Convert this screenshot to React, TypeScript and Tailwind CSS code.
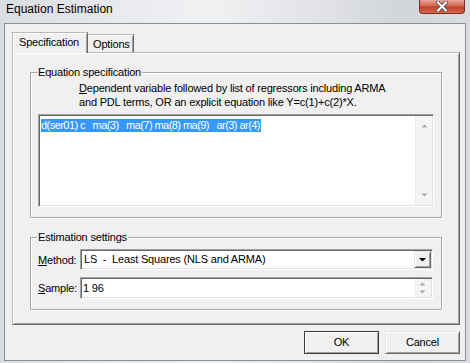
import React from 'react';

const sunken =
  'border border-t-[#a0a0a0] border-l-[#a0a0a0] border-r-white border-b-white shadow-[inset_1px_1px_0_#696969,inset_-1px_-1px_0_#e3e3e3]';
const raised =
  'border border-t-[#e3e3e3] border-l-[#e3e3e3] border-r-[#696969] border-b-[#696969] shadow-[inset_1px_1px_0_#fff,inset_-1px_-1px_0_#a0a0a0]';
const etched = 'border border-[#a8a8a8] shadow-[inset_1px_1px_0_#fff,1px_1px_0_#fff]';

function Arrow({ up, dark }: { up?: boolean; dark?: boolean }) {
  return (
    <svg width="7" height="5" viewBox="0 0 7 5">
      {dark ? (
        <path d="M0 1h7L3.5 4.5z" fill="#000" />
      ) : up ? (
        <>
          <path d="M0.5 4.5h6L3.5 1.5z" fill="#fff" transform="translate(0.5 0.5)" />
          <path d="M0.5 4.5h6L3.5 1.5z" fill="#a3a3a3" />
        </>
      ) : (
        <>
          <path d="M0.5 0.5h6L3.5 3.5z" fill="#fff" transform="translate(0.5 0.5)" />
          <path d="M0.5 0.5h6L3.5 3.5z" fill="#a3a3a3" />
        </>
      )}
    </svg>
  );
}

function GroupBox({ title, className, children }: { title: string; className: string; children: React.ReactNode }) {
  return (
    <div className={`relative ${etched} ${className}`}>
      <span className="absolute left-[6px] top-[-8px] bg-[#f0f0f0] px-[1px] leading-[14px]">{title}</span>
      {children}
    </div>
  );
}

export default function App() {
  return (
    <div className="w-[470px] h-[363px] overflow-hidden flex flex-col px-[4px] pb-[2px] bg-[linear-gradient(90deg,#dadde1_0%,#e8eaed_25%,#f0f1f3_45%,#dfe1e4_70%,#d2d5d9_85%,#dadcdf_100%)] font-['Liberation_Sans',Arial,sans-serif] text-[11px] tracking-[-0.18px] text-black">
      <div className="h-[23px] shrink-0 flex items-start justify-between">
        <span className="pl-[2px] pt-[2px] text-[12px] tracking-normal leading-[15px] text-black">Equation Estimation</span>
        <div className="mr-[1px] w-[46px] h-[14px] rounded-b-[4px] border border-t-0 border-[#7a2d24] bg-[linear-gradient(180deg,#e7a395_0%,#d3654f_45%,#c24128_55%,#d36a4f_100%)] flex items-center justify-center">
          <svg width="12" height="11" viewBox="0 0 12 11">
            <path d="M2 1.5l8 8M10 1.5l-8 8" stroke="#4a4a5a" strokeWidth="3.6" strokeLinecap="square" />
            <path d="M2 1.5l8 8M10 1.5l-8 8" stroke="#fff" strokeWidth="2" strokeLinecap="square" />
          </svg>
        </div>
      </div>

      <div className="flex-1 border border-[#8a9097] bg-[#f0f0f0] flex flex-col pl-[7px] pr-[5px]">
        <div className="h-[28px] shrink-0 flex items-end">
          <div className="relative z-10 h-[21px] mb-[-1px] w-[76px] border border-b-0 border-t-[#b9b9b9] border-l-[#b9b9b9] border-r-[#696969] shadow-[inset_1px_1px_0_#fff,inset_-1px_0_0_#a0a0a0] bg-[#f0f0f0] pl-[6px] pt-[3px] leading-[13px]">
            Specification
          </div>
          <div className="h-[18px] w-[46px] border border-b-0 border-t-[#b9b9b9] border-l-0 border-r-[#696969] shadow-[inset_0_1px_0_#fff,inset_-1px_0_0_#a0a0a0] pl-[5px] pt-[3px] leading-[13px]">
            Options
          </div>
        </div>

        <div className="h-[273px] shrink-0 border border-t-[#b9b9b9] border-l-[#b9b9b9] border-r-[#696969] border-b-[#696969] shadow-[inset_1px_1px_0_#fff,inset_-1px_-1px_0_#a0a0a0] px-[17px] pt-[19px] flex flex-col">
          <GroupBox title="Equation specification" className="h-[146px] shrink-0 pt-[8px] flex flex-col">
            <div className="pl-[48px] leading-[14px]">
              <div>
                <u>D</u>ependent variable followed by list of regressors including ARMA
              </div>
              <div>and PDL terms, OR an explicit equation like Y=c(1)+c(2)*X.</div>
            </div>
            <div className={`mt-[5px] ml-[7px] w-[396px] h-[93px] bg-white ${sunken} p-[1px] flex`}>
              <div className="flex-1 pl-[1px] pt-[1px]">
                <span className="whitespace-pre bg-[#3399ff] text-white leading-[13px] tracking-[-0.55px] inline-block pr-[1px]">
                  {'d(ser01) c   ma(3)   ma(7) ma(8) ma(9)   ar(3) ar(4)'}
                </span>
              </div>
              <div className="w-[17px] bg-[#f4f4f4] border-l border-[#ececec] flex flex-col items-center justify-between pt-[7px] pb-[7px]">
                <Arrow up />
                <Arrow />
              </div>
            </div>
          </GroupBox>

          <GroupBox title="Estimation settings" className="mt-[19px] h-[73px] shrink-0 pt-[11px] pl-[7px] flex flex-col">
            <div className="flex items-center h-[21px]">
              <span className="w-[42px] leading-[14px]">
                <u>M</u>ethod:
              </span>
              <div className={`w-[353px] h-[21px] bg-white ${sunken} p-[1px] flex`}>
                <span className="flex-1 pl-[2px] leading-[17px] whitespace-pre">{'LS  -  Least Squares (NLS and ARMA)'}</span>
                <div className={`w-[17px] h-[17px] bg-[#f0f0f0] ${raised} flex items-center justify-center`}>
                  <Arrow dark />
                </div>
              </div>
            </div>
            <div className="mt-[7px] flex items-center h-[22px]">
              <span className="w-[42px] leading-[14px]">
                <u>S</u>ample:
              </span>
              <div className={`w-[353px] h-[22px] bg-white ${sunken} p-[1px] flex`}>
                <span className="flex-1 pl-[1px] leading-[18px]">1 96</span>
                <div className="w-[17px] bg-[#f4f4f4] flex flex-col items-center justify-center gap-[4px]">
                  <Arrow up />
                  <Arrow />
                </div>
              </div>
            </div>
          </GroupBox>
        </div>

        <div className="mt-[6px] flex justify-end gap-[6px]">
          <div className="w-[75px] h-[23px] border border-[#3c3c3c] shadow-[inset_1px_1px_0_#fff,inset_-1px_-1px_0_#a0a0a0] flex items-center justify-center">
            OK
          </div>
          <div className={`w-[75px] h-[23px] ${raised} flex items-center justify-center`}>Cancel</div>
        </div>
      </div>
    </div>
  );
}
